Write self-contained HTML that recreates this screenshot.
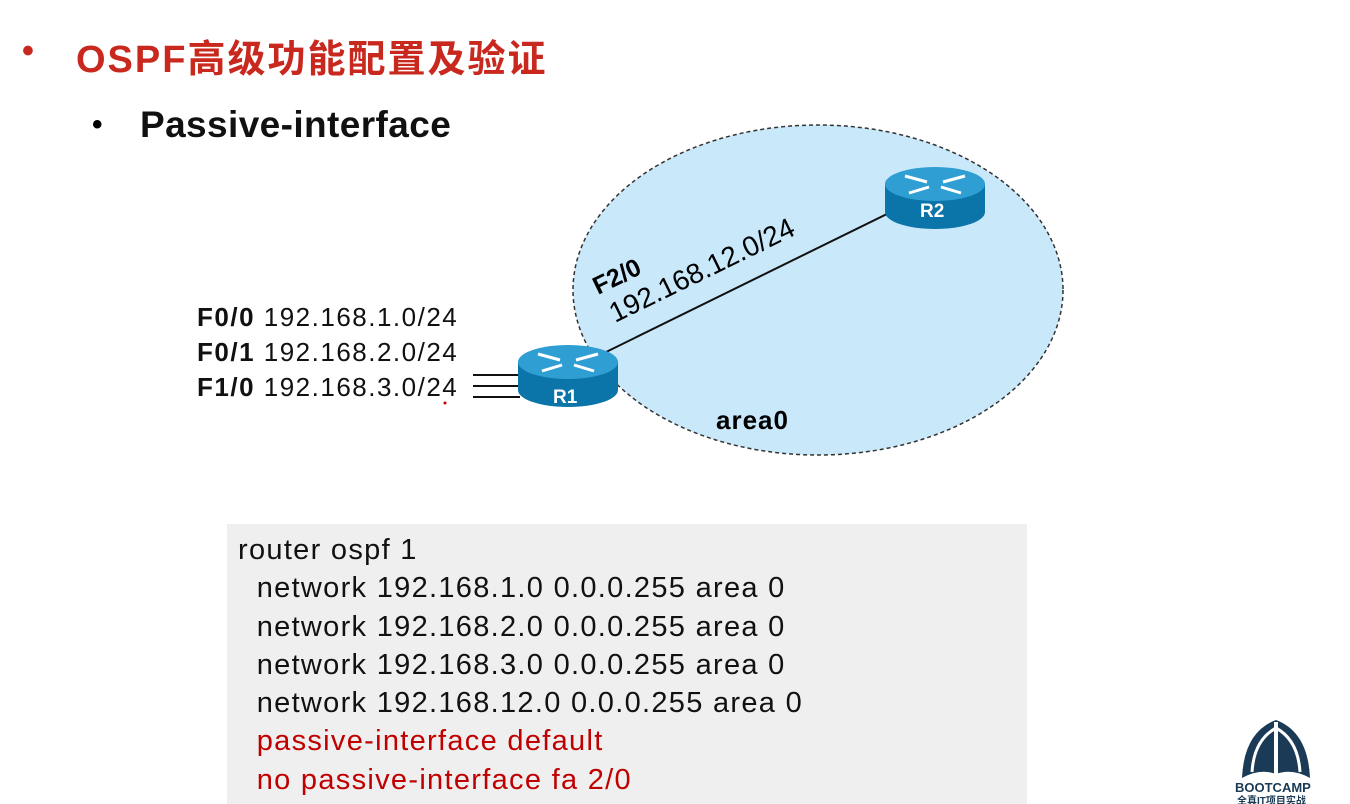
<!DOCTYPE html>
<html><head><meta charset="utf-8"><style>
body{margin:0;width:1350px;height:804px;background:#fff;position:relative;overflow:hidden;font-family:"Liberation Sans","Noto Sans CJK SC",sans-serif}
.a{position:absolute;white-space:nowrap}
</style></head><body>
<div class="a" style="left:22px;top:32px;font-size:34px;color:#c8281e;font-weight:bold">•</div>
<div class="a" style="left:76px;top:28px;font-size:38px;letter-spacing:2px;color:#c8281e;font-weight:bold">OSPF高级功能配置及验证</div>
<div class="a" style="left:92px;top:108px;font-size:30px;font-weight:bold">•</div>
<div class="a" style="left:140px;top:104px;font-size:37px;letter-spacing:0.4px;font-weight:bold;color:#111">Passive-interface</div>
<svg class="a" style="left:0;top:0" width="1350" height="804">
<ellipse cx="818" cy="290" rx="245" ry="165" fill="#c9e9fb" stroke="#333" stroke-width="1.5" stroke-dasharray="4,3"/>
<line x1="600" y1="355" x2="895" y2="210" stroke="#111" stroke-width="2"/>
<g stroke="#111" stroke-width="2"><line x1="473" y1="375" x2="520" y2="375"/><line x1="473" y1="386" x2="520" y2="386"/><line x1="473" y1="397" x2="520" y2="397"/></g>
<g id="r"><path d="M518 362 v28 a50 17 0 0 0 100 0 v-28 z" fill="#0b74a8"/><ellipse cx="568" cy="362" rx="50" ry="17" fill="#2f9fd3"/>
<g stroke="#fff" stroke-width="3" fill="none"><path d="M538 354 l22 6 M598 354 l-22 6 M542 371 l20 -6 M594 371 l-20 -6"/></g></g>
<use href="#r" transform="translate(367,-178)"/>
<text x="553" y="403" font-size="19" font-weight="bold" fill="#fff">R1</text>
<text x="920" y="217" font-size="19" font-weight="bold" fill="#fff">R2</text>
<text transform="translate(598,295) rotate(-26)" font-size="25" font-weight="bold">F2/0</text>
<text transform="translate(615,323) rotate(-26)" font-size="28">192.168.12.0/24</text>
<text x="716" y="429" font-size="26" font-weight="bold" letter-spacing="1">area0</text>
<circle cx="445" cy="403" r="1.5" fill="#c00"/>
</svg>
<div class="a" style="left:197px;top:300px;font-size:26px;letter-spacing:1.5px;line-height:35px;color:#111"><b>F0/0</b> 192.168.1.0/24<br><b>F0/1</b> 192.168.2.0/24<br><b>F1/0</b> 192.168.3.0/24</div>
<div class="a" style="left:227px;top:524px;width:800px;height:280px;background:#efefef"></div>
<div class="a" style="left:238px;top:531px;font-size:29px;letter-spacing:1.3px;line-height:38.3px;color:#111">router ospf 1<br>&nbsp;&nbsp;network 192.168.1.0 0.0.0.255 area 0<br>&nbsp;&nbsp;network 192.168.2.0 0.0.0.255 area 0<br>&nbsp;&nbsp;network 192.168.3.0 0.0.0.255 area 0<br>&nbsp;&nbsp;network 192.168.12.0 0.0.0.255 area 0<br><span style="color:#c00000">&nbsp;&nbsp;passive-interface default<br>&nbsp;&nbsp;no passive-interface fa 2/0</span></div>
<svg class="a" style="left:1230px;top:712px" width="110" height="92">
<path d="M12 66 Q14 20 46 8 Q78 20 80 66 Q62 56 46 62 Q30 56 12 66z" fill="#1a3a55"/>
<path d="M22 60 Q24 28 46 16 Q68 28 70 60" fill="none" stroke="#fff" stroke-width="3"/>
<path d="M46 10 v52" stroke="#fff" stroke-width="4"/>
<text x="5" y="80" font-size="13" font-weight="bold" fill="#1a3a55">BOOTCAMP</text>
<text x="7" y="92" font-size="10" font-weight="bold" fill="#1a3a55">全真IT项目实战</text>
</svg>
</body></html>
